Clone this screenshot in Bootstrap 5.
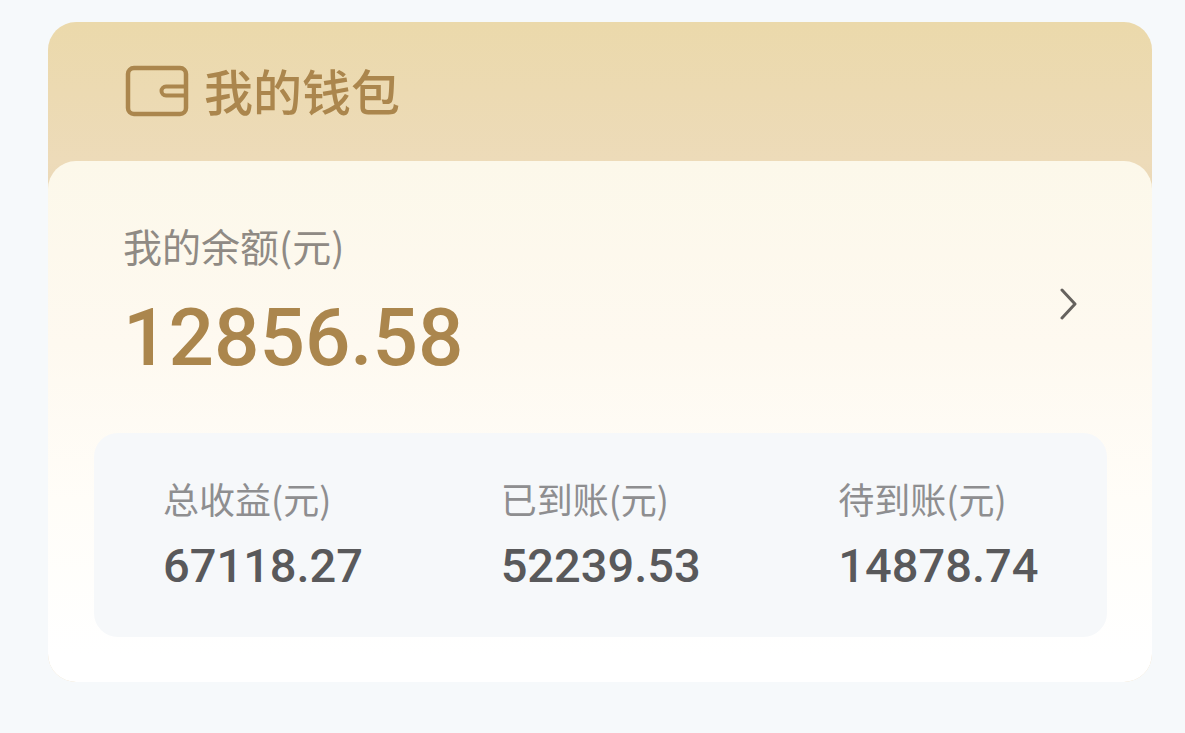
<!DOCTYPE html>
<html lang="zh-CN">
<head>
<meta charset="utf-8">
<meta name="viewport" content="width=device-width, initial-scale=1">
<title>我的钱包</title>
<link href="https://cdn.jsdelivr.net/npm/bootstrap@5.3.0/dist/css/bootstrap.min.css" rel="stylesheet">
<style>
  body { background: #f6f9fb; font-family: "Noto Sans CJK SC", sans-serif; }
  .wallet-page { padding: 22px 33px 48px 48px; }
  .wallet { border-radius: 28px; background: linear-gradient(#ebd9ab, #eddbb9 140px, #ead8b8 170px); }
  .wallet-head { height: 139px; padding: 0 77px 2px; gap: 15px; color: #ab864d; }
  .wallet-title { font-size: 49px; line-height: 72px; padding-bottom: 2px; font-weight: 500; }
  .wallet-body { border-radius: 28px; padding: 56px 45px 45px 46px; background: linear-gradient(#fcf8ea, #fef9f0 35%, #fffdf8 65%, #ffffff 95%); }
  .balance { padding: 0 30px 0 29px; margin-bottom: 42px; }
  .balance-label { font-size: 39px; line-height: 56px; color: #8f8a84; }
  .balance-value, .stat-value { font-family: Roboto, sans-serif; font-weight: 500; }
  .balance-value { font-size: 80px; line-height: 106px; padding-top: 12px; color: #ab864d; }
  .more-link { color: #66625e; }
  .stats { border-radius: 24px; background: #f6f8fa; padding: 39px 0 29px; }
  .stat { padding-left: 69px; }
  .stat-label { font-size: 36px; line-height: 52px; font-weight: 400; color: #8e8e90; }
  .stat-value { font-size: 47px; line-height: 84px; color: #59595b; }
</style>
</head>
<body>
<main class="wallet-page">
  <section class="wallet">
    <header class="wallet-head d-flex align-items-center">
      <svg width="64" height="52" viewBox="0 0 64 52" fill="none" stroke="currentColor" stroke-width="4.500" aria-hidden="true">
        <rect x="3" y="3" width="58" height="46" rx="6"/>
        <path d="M61 21.500H41a4.500 4.500 0 0 0 0 9h20" stroke-width="4"/>
      </svg>
      <h1 class="wallet-title m-0">我的钱包</h1>
    </header>
    <div class="wallet-body">
      <div class="balance d-flex justify-content-between align-items-center">
        <div>
          <div class="balance-label">我的余额(元)</div>
          <div class="balance-value">12856.58</div>
        </div>
        <a href="#" class="more-link d-block" aria-label="查看余额明细">
          <svg class="d-block" width="20" height="36" viewBox="0 0 20 36" fill="none" stroke="currentColor" stroke-width="3" stroke-linecap="round" stroke-linejoin="round" aria-hidden="true"><path d="M5 4l13 14L5 32"/></svg>
        </a>
      </div>
      <dl class="stats row g-0 m-0">
        <div class="stat col-4"><dt class="stat-label">总收益(元)</dt><dd class="stat-value m-0">67118.27</dd></div>
        <div class="stat col-4"><dt class="stat-label">已到账(元)</dt><dd class="stat-value m-0">52239.53</dd></div>
        <div class="stat col-4"><dt class="stat-label">待到账(元)</dt><dd class="stat-value m-0">14878.74</dd></div>
      </dl>
    </div>
  </section>
</main>
<script src="https://cdn.jsdelivr.net/npm/bootstrap@5.3.0/dist/js/bootstrap.bundle.min.js"></script>
</body>
</html>
